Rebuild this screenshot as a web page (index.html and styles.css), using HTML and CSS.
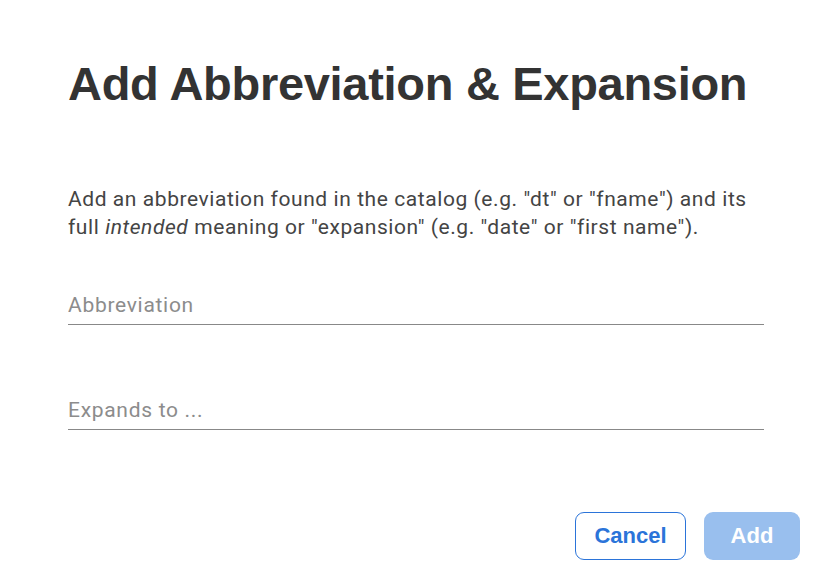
FILE: index.html
```html
<!DOCTYPE html>
<html>
<head>
<meta charset="utf-8">
<link rel="stylesheet" href="styles.css">
</head>
<body>
<div class="dialog">
  <h1 class="title">Add Abbreviation &amp; Expansion</h1>
  <p class="desc">Add an abbreviation found in the catalog (e.g. "dt" or "fname") and its full <em>intended</em> meaning or "expansion" (e.g. "date" or "first name").</p>
  <div class="field"><input class="input" type="text" placeholder="Abbreviation"></div>
  <div class="field"><input class="input" type="text" placeholder="Expands to ..."></div>
  <div class="actions">
    <button class="btn btn-cancel">Cancel</button>
    <button class="btn btn-add" disabled>Add</button>
  </div>
</div>
</body>
</html>
```
FILE: styles.css
```css
html, body {
  margin: 0;
  padding: 0;
  background: #fff;
}
.dialog {
  width: 834px;
  height: 580px;
  box-sizing: border-box;
  padding: 56px 34px 0 68px;
  display: flex;
  flex-direction: column;
}
.title {
  margin: 0;
  font-family: "Liberation Sans", Arial, sans-serif;
  font-weight: 700;
  font-size: 47px;
  line-height: 56px;
  color: #333;
  letter-spacing: -0.3px;
}
.desc {
  margin: 73px 0 0 0;
  width: 700px;
  font-family: Roboto, "Liberation Sans", sans-serif;
  font-size: 21px;
  line-height: 28px;
  color: #444;
  letter-spacing: 0.57px;
}
.desc em {
  font-style: italic;
}
.field {
  width: 696px;
  margin-top: 47px;
}
.field + .field {
  margin-top: 68px;
}
.input {
  display: block;
  width: 100%;
  box-sizing: border-box;
  border: none;
  border-bottom: 1px solid #888;
  padding: 4px 0 6px 0;
  font-family: Roboto, "Liberation Sans", sans-serif;
  font-size: 21px;
  line-height: 26px;
  letter-spacing: 0.7px;
  color: #333;
  outline: none;
  background: transparent;
}
.input::placeholder {
  color: #8c8c8c;
}
.actions {
  margin-top: 82px;
  display: flex;
  justify-content: flex-end;
  gap: 18px;
}
.btn {
  height: 48px;
  border-radius: 9px;
  font-family: "Liberation Sans", Arial, sans-serif;
  font-weight: 700;
  font-size: 22px;
  box-sizing: border-box;
}
.btn-cancel {
  width: 111px;
  background: #fff;
  border: 1px solid #2b74d9;
  color: #2b74d9;
}
.btn-add {
  width: 96px;
  background: #99bfee;
  border: none;
  color: #fff;
}
```
